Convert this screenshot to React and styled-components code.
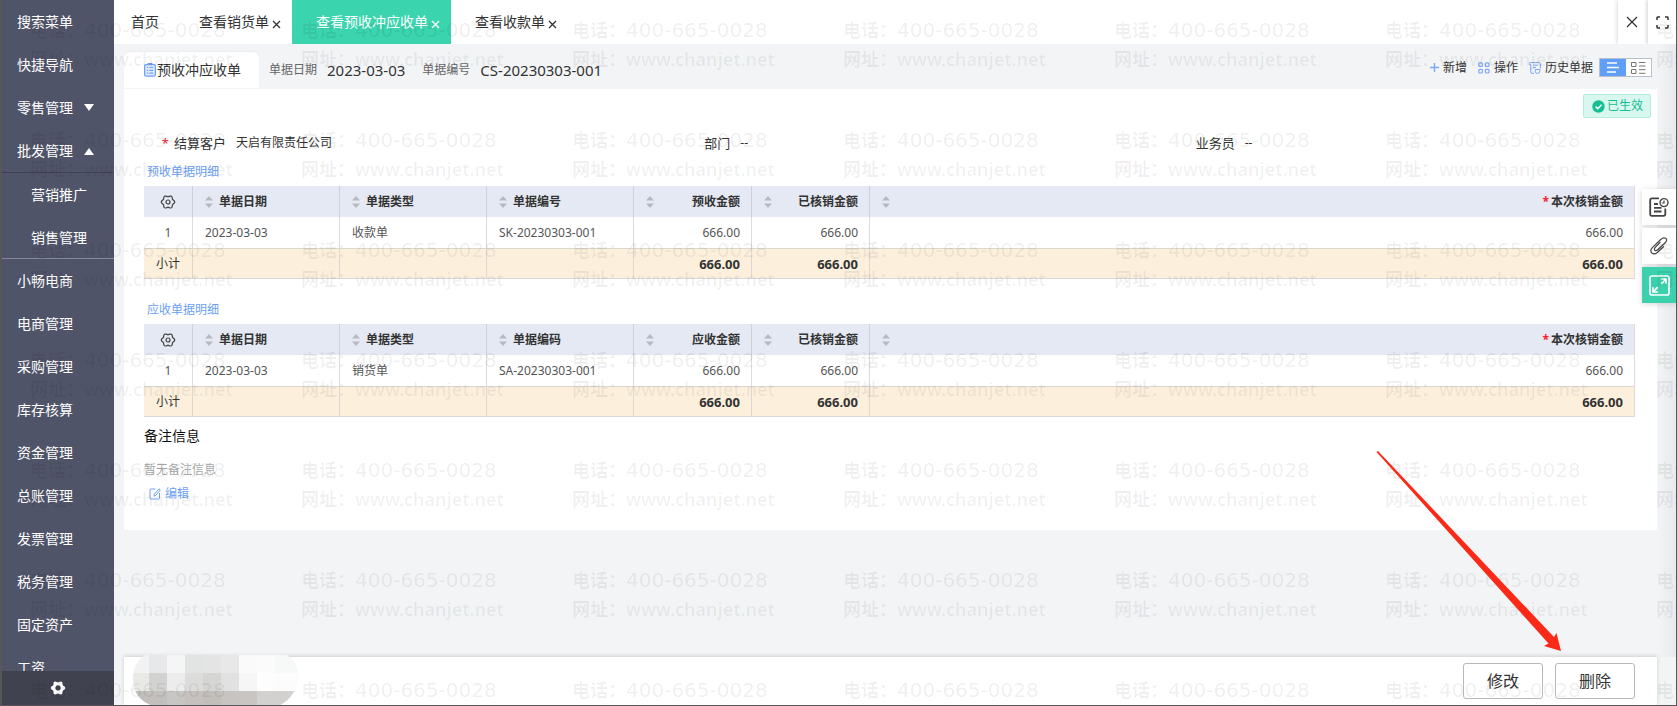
import React from 'react';
import styled, { createGlobalStyle } from 'styled-components';

const GlobalStyle = createGlobalStyle`
	* {
		box-sizing: border-box;
	}
	body {
		margin: 0;
		font-family: 'Noto Sans', 'Noto Sans CJK SC', sans-serif;
		font-size: 12px;
		line-height: 20px;
		color: #333;
	}
	button {
		border: 0;
		padding: 0;
		background: none;
		font: inherit;
		color: inherit;
		cursor: pointer;
	}
	a {
		color: inherit;
		text-decoration: none;
	}
	svg {
		display: block;
		flex: none;
	}
`;

const Shell = styled.div`
	position: relative;
	display: flex;
	height: 100vh;
	overflow: hidden;
	background: #f2f4f6;
	border: solid #57575a;
	border-width: 0 1px 1px 2px;
`;

/* sidebar */

const Sidebar = styled.aside`
	display: flex;
	flex-direction: column;
	width: 112px;
	flex: none;
	background: #505469;
	color: #fff;
`;

const Menu = styled.nav`
	flex: 1;
	min-height: 0;
	overflow: hidden;
	font-size: 14px;
`;

const MenuLink = styled.a`
	display: flex;
	align-items: center;
	gap: 11px;
	height: 43px;
	padding-left: ${({ $sub }) => ($sub ? '29px' : '15px')};
`;

const SubMenu = styled.div`
	border-top: 1px solid #3f4253;
	box-shadow: inset 0 -1px #858899;
`;

const SettingsButton = styled.button`
	display: flex;
	align-items: center;
	justify-content: center;
	height: 34px;
	background: #40434f;
	color: #fff;
`;

/* top tabs */

const Main = styled.div`
	display: flex;
	flex-direction: column;
	flex: 1;
	min-width: 0;
`;

const TopBar = styled.header`
	display: flex;
	height: 44px;
	flex: none;
	background: #fff;
`;

const Tab = styled.button`
	display: flex;
	align-items: center;
	gap: 3px;
	padding: ${({ $home }) => ($home ? '0 16px 0 17px' : '0 11px 0 24px')};
	font-size: 14px;
	white-space: nowrap;
	background: ${({ $active }) => ($active ? '#3ad4af' : 'transparent')};
	color: ${({ $active }) => ($active ? '#fff' : '#333')};
	svg {
		margin-top: 4px;
	}
`;

const WindowButtons = styled.div`
	display: flex;
	gap: 2px;
	margin-left: auto;
`;

const WindowButton = styled.button`
	display: flex;
	align-items: center;
	justify-content: center;
	width: 28px;
	background: #fff;
	box-shadow: -1px 0 4px rgba(0, 0, 0, 0.15);
`;

/* document header */

const Page = styled.main`
	flex: 1;
	min-height: 0;
	padding: 0 19px 0 10px;
	background: linear-gradient(to left, #e7eaee, #f2f4f6 18px);
`;

const DocHeader = styled.div`
	display: flex;
	align-items: center;
	height: 44px;
	padding-top: 8px;
	margin-bottom: 1px;
`;

const DocTab = styled.h1`
	display: flex;
	align-items: center;
	gap: 1px;
	width: 135px;
	height: 36px;
	margin: 0 10px 0 0;
	padding-left: 20px;
	background: #fff;
	border-radius: 6px 6px 0 0;
	box-shadow: 0 -1px 2px rgba(0, 0, 0, 0.04);
	font-size: 14px;
	font-weight: 400;
	white-space: nowrap;
	svg {
		color: #6d9ff5;
	}
`;

const Meta = styled.div`
	display: flex;
	align-items: center;
	gap: 10px;
	margin-right: 17px;
	color: #666;
	white-space: nowrap;
	strong {
		font-size: 15px;
		font-weight: 400;
		color: #333;
	}
`;

const Actions = styled.div`
	display: flex;
	align-items: center;
	gap: 11px;
	height: 20px;
	margin: 0 5px 5px auto;
`;

const Action = styled.button`
	display: flex;
	align-items: center;
	gap: 4px;
	white-space: nowrap;
	svg {
		color: #7aa6f5;
	}
`;

const ViewToggle = styled.div`
	display: flex;
	width: 53px;
	height: 19px;
	margin-left: -5px;
	border: 1px solid #b9c0cb;
	background: #fff;
`;

const ViewButton = styled.button`
	display: flex;
	align-items: center;
	justify-content: center;
	flex: 1;
	background: ${({ $on }) => ($on ? '#609ff8' : '#fff')};
	color: ${({ $on }) => ($on ? '#fff' : '#777')};
`;

/* document card */

const Card = styled.section`
	padding: 5px 0 26px 20px;
	background: #fff;
`;

const Status = styled.div`
	display: flex;
	align-items: center;
	gap: 2px;
	width: 68px;
	height: 24px;
	margin: 0 6px 12px auto;
	padding-left: 8px;
	border: 1px solid #b5eddd;
	border-radius: 2px;
	background: #d8f7ee;
	color: #15bf92;
`;

const Fields = styled.dl`
	display: grid;
	grid-template-columns: repeat(3, 1fr);
	height: 26px;
	margin: 0 0 6px;
	line-height: 26px;
`;

const Field = styled.div`
	display: flex;
	align-items: center;
	gap: 10px;
	dt {
		width: 82px;
		text-align: right;
		font-size: 13px;
	}
	dd {
		margin: 0;
	}
`;

const Required = styled.span`
	color: #f5222d;
	margin-right: ${({ $wide }) => ($wide ? '5px' : '2px')};
`;

const Detail = styled.section`
	margin: 0 22px 21px 0;
	&:last-of-type {
		margin-bottom: 7px;
	}
`;

const DetailTitle = styled.h2`
	margin: 0 0 4px 3px;
	font-size: 12px;
	font-weight: 400;
	color: #6d9ff5;
`;

const Table = styled.table`
	width: 100%;
	table-layout: fixed;
	border-collapse: separate;
	border-spacing: 0;
	border-right: 1px solid #dcdcdc;
	th,
	td {
		height: 31px;
		padding: 0 11px 0 12px;
		border-left: 1px solid #dcdcde;
		text-align: left;
		white-space: nowrap;
	}
	th:first-child,
	td:first-child {
		padding: 0;
		border-left: 0;
		text-align: center;
	}
	thead th {
		background: #e5e9f4;
		border-left-color: #cdd1db;
	}
	td {
		color: #555;
	}
	tfoot td {
		background: #fcf0dc;
		border-top: 1px solid #dcd8d0;
		border-bottom: 1px solid #d8d8d8;
		border-left-color: #dcd8d0;
		color: #333;
	}
`;

const Col = styled.col`
	width: ${({ $width }) => ($width ? `${$width}px` : 'auto')};
`;

const HeadCell = styled.div`
	display: flex;
	align-items: center;
	justify-content: ${({ $number }) => ($number ? 'space-between' : 'flex-start')};
	gap: 6px;
`;

const IconButton = styled.button`
	display: block;
	margin: 0 auto;
	color: #444;
`;

const NumberCell = styled.td`
	&& {
		text-align: right;
	}
	font-size: ${({ $total }) => ($total ? '13px' : '12px')};
	font-weight: ${({ $total }) => ($total ? 700 : 400)};
`;

const NotesTitle = styled.h2`
	margin: 0 0 12px;
	font-size: 14px;
	font-weight: 400;
	line-height: 24px;
	color: #111;
`;

const NotesEmpty = styled.p`
	margin: 0 0 4px;
	color: #aaa;
`;

const EditButton = styled.button`
	display: flex;
	align-items: center;
	gap: 4px;
	margin-left: 5px;
	color: #6d9ff5;
`;

/* footer */

const FootWrap = styled.div`
	padding: 0 19px 0 10px;
	flex: none;
`;

const Footer = styled.footer`
	position: relative;
	display: flex;
	align-items: center;
	justify-content: flex-end;
	gap: 12px;
	height: 48px;
	padding-right: 22px;
	background: #fff;
	box-shadow: 0 -1px 4px rgba(0, 0, 0, 0.16);
`;

const FootButton = styled.button`
	width: 80px;
	height: 36px;
	border: 1px solid #b8b8b8;
	border-radius: 3px;
	background: #fff;
	font-size: 16px;
`;

const Mosaic = styled.svg`
	position: absolute;
	left: 9px;
	bottom: -1px;
`;

/* floating layers */

const Rail = styled.div`
	position: absolute;
	top: 189px;
	right: 0;
	display: flex;
	flex-direction: column;
	gap: 3px;
`;

const RailButton = styled.button`
	display: flex;
	align-items: center;
	justify-content: center;
	width: 34px;
	height: 36px;
	background: ${({ $on }) => ($on ? '#3ad1ac' : '#fff')};
	color: ${({ $on }) => ($on ? '#fff' : '#444')};
	box-shadow: 0 1px 6px rgba(0, 0, 0, 0.16);
`;

const Watermark = styled.div`
	position: absolute;
	inset: 0;
	display: grid;
	grid-template-columns: repeat(7, 271px);
	grid-auto-rows: 110px;
	padding: 16px 0 0 28px;
	overflow: hidden;
	pointer-events: none;
	font-size: 18px;
	line-height: 29px;
	font-weight: 600;
	white-space: nowrap;
	color: rgba(0, 0, 0, 0.06);
`;

const Phone = styled.span`
	font-family: 'DejaVu Sans', sans-serif;
	font-size: 20px;
	font-weight: 400;
	color: rgba(0, 0, 0, 0.07);
`;

const Arrow = styled.svg`
	position: absolute;
	right: 113px;
	bottom: 52px;
	pointer-events: none;
`;

const lobes = (size, base, wave) => {
	const points = [];
	for (let a = 0; a < 360; a += 6) {
		const t = (a * Math.PI) / 180;
		const r = base + wave * Math.cos(6 * t);
		points.push(`${(size / 2 + r * Math.cos(t)).toFixed(2)} ${(size / 2 + r * Math.sin(t)).toFixed(2)}`);
	}
	return `M${points.join('L')}Z`;
};

const Svg = ({ w, h = w, children }) => (
	<svg width={w} height={h} viewBox={`0 0 ${w} ${h}`} fill="none" stroke="currentColor" aria-hidden="true">
		{children}
	</svg>
);

const CrossIcon = ({ size = 9 }) => (
	<Svg w={size}>
		<path d={`M1 1L${size - 1} ${size - 1}M${size - 1} 1L1 ${size - 1}`} strokeWidth="1.3" />
	</Svg>
);

const CaretIcon = ({ up }) => (
	<Svg w={10} h={8}>
		<path d={up ? 'M0 8L5 1L10 8Z' : 'M0 0H10L5 7Z'} fill="currentColor" stroke="none" />
	</Svg>
);

const SortIcon = () => (
	<svg width="8" height="12" viewBox="0 0 8 12" fill="#b6b9c0" aria-hidden="true">
		<path d="M0 4.5L4 0L8 4.5ZM0 7.5H8L4 12Z" />
	</svg>
);

const GearIcon = () => (
	<Svg w={16}>
		<path d={lobes(16, 6, 0.7)} strokeWidth="1.2" />
		<circle cx="8" cy="8" r="2" strokeWidth="1.2" />
	</Svg>
);

const ListIcon = () => (
	<Svg w={12} h={14}>
		<rect x="0.6" y="1.6" width="10.8" height="11.6" rx="1.5" strokeWidth="1.2" fill="#dfe9fd" />
		<path d="M3.5 0.7H8.5M2.8 4.5H4.2M5.4 4.5H9.2M2.8 7.3H4.2M5.4 7.3H9.2M2.8 10.2H4.2M5.4 10.2H9.2" strokeWidth="1.2" />
	</Svg>
);

const menuTop = [['搜索菜单'], ['快捷导航'], ['零售管理', 'down'], ['批发管理', 'up']];
const menuSub = ['营销推广', '销售管理'];
const menuRest = ['小畅电商', '电商管理', '采购管理', '库存核算', '资金管理', '总账管理', '发票管理', '税务管理', '固定资产', '工资'];

const tabs = [{ name: '查看销货单' }, { name: '查看预收冲应收单', active: true }, { name: '查看收款单' }];

const fields = [
	{ label: '结算客户', value: '天启有限责任公司', required: true },
	{ label: '部门', value: '--' },
	{ label: '业务员', value: '--' }
];

const details = [
	{
		title: '预收单据明细',
		heads: ['单据日期', '单据类型', '单据编号', '预收金额', '已核销金额', '本次核销金额'],
		row: ['2023-03-03', '收款单', 'SK-20230303-001', '666.00', '666.00', '666.00']
	},
	{
		title: '应收单据明细',
		heads: ['单据日期', '单据类型', '单据编码', '应收金额', '已核销金额', '本次核销金额'],
		row: ['2023-03-03', '销货单', 'SA-20230303-001', '666.00', '666.00', '666.00']
	}
];

const widths = [48, 147, 147, 147, 118, 118, 0];

const mosaic = [
	['#f1f2f1', '#e6e8e9', '#f5f5f5', '#e2e4e4', '#e3e4e3', '#e8e8e9', '#fafafa', '#fafbfa', '#f7f8f8'],
	['#e9eae6', '#d2d2d1', '#ececec', '#dcdcdb', '#d5d5d3', '#e1e1e1', '#f6f6f6', '#fdfdfd', '#fcfcfc'],
	['#c0bfbd', '#c2bfbd', '#c8c6c4', '#c6c1be', '#c2beba', '#c7c4c1', '#c8c5c3', '#d3d1d0', '#d3d1cf']
];

const DetailTable = ({ title, heads, row }) => (
	<Detail>
		<DetailTitle>{title}</DetailTitle>
		<Table aria-label={title}>
			<colgroup>{widths.map((width, i) => <Col key={i} $width={width} />)}</colgroup>
			<thead>
				<tr>
					<th>
						<IconButton type="button" aria-label="列设置">
							<GearIcon />
						</IconButton>
					</th>
					{heads.map((head, i) => (
						<th key={head}>
							<HeadCell $number={i > 2}>
								<SortIcon />
								<span>
									{i === 5 && <Required>*</Required>}
									{head}
								</span>
							</HeadCell>
						</th>
					))}
				</tr>
			</thead>
			<tbody>
				<tr>
					<td>1</td>
					{row.map((value, i) => (i > 2 ? <NumberCell key={i}>{value}</NumberCell> : <td key={i}>{value}</td>))}
				</tr>
			</tbody>
			<tfoot>
				<tr>
					<td>小计</td>
					{row.map((value, i) => (i > 2 ? <NumberCell key={i} $total>{value}</NumberCell> : <td key={i} />))}
				</tr>
			</tfoot>
		</Table>
	</Detail>
);

const App = () => (
	<>
		<GlobalStyle />
		<Shell>
			<Sidebar>
				<Menu>
					{menuTop.map(([name, caret]) => (
						<MenuLink key={name} href="#">
							{name}
							{caret && <CaretIcon up={caret === 'up'} />}
						</MenuLink>
					))}
					<SubMenu>
						{menuSub.map((name) => (
							<MenuLink key={name} href="#" $sub>
								{name}
							</MenuLink>
						))}
					</SubMenu>
					{menuRest.map((name) => (
						<MenuLink key={name} href="#">
							{name}
						</MenuLink>
					))}
				</Menu>
				<SettingsButton type="button" aria-label="设置">
					<Svg w={16}>
						<path d={`${lobes(16, 6.4, 0.9)}M8 5.3a2.7 2.7 0 1 0 0.01 0Z`} fill="currentColor" fillRule="evenodd" stroke="none" />
					</Svg>
				</SettingsButton>
			</Sidebar>

			<Main>
				<TopBar>
					<Tab type="button" $home>
						首页
					</Tab>
					{tabs.map(({ name, active }) => (
						<Tab key={name} type="button" $active={active}>
							{name}
							<CrossIcon />
						</Tab>
					))}
					<WindowButtons>
						<WindowButton type="button" aria-label="关闭">
							<CrossIcon size={12} />
						</WindowButton>
						<WindowButton type="button" aria-label="全屏">
							<Svg w={13}>
								<path d="M1 4V1.7Q1 1 1.7 1H4M9 1h2.3Q12 1 12 1.7V4M12 9v2.3q0 .7-.7.7H9M4 12H1.7Q1 12 1 11.3V9" strokeWidth="1.5" />
							</Svg>
						</WindowButton>
					</WindowButtons>
				</TopBar>

				<Page>
					<DocHeader>
						<DocTab>
							<ListIcon />
							预收冲应收单
						</DocTab>
						<Meta>
							单据日期<strong>2023-03-03</strong>
						</Meta>
						<Meta>
							单据编号<strong>CS-20230303-001</strong>
						</Meta>
						<Actions>
							<Action type="button">
								<Svg w={9}>
									<path d="M4.5 0V9M0 4.5H9" strokeWidth="1.3" />
								</Svg>
								新增
							</Action>
							<Action type="button">
								<Svg w={12}>
									<rect x="0.8" y="0.8" width="3.6" height="3.6" rx="1" strokeWidth="1.2" />
									<rect x="7.4" y="0.8" width="3.6" height="3.6" rx="1" strokeWidth="1.2" />
									<rect x="0.8" y="7.4" width="3.6" height="3.6" rx="1" strokeWidth="1.2" />
									<rect x="7.4" y="7.4" width="3.6" height="3.6" rx="1" strokeWidth="1.2" />
								</Svg>
								操作
							</Action>
							<Action type="button">
								<Svg w={12}>
									<path d="M5 11.4H3Q1.8 11.4 1.8 10V2.6M.4 2.6V1.4Q.4.6 1.2.6H10.6Q11.4.6 11.4 1.4V6.5M.4 2.6H1.8M4 3.2H9.2M4 5.6H7M6.2 7.5H10.8V9.2Q10.8 11.4 8.5 11.4Q6.2 11.4 6.2 9.2Z" />
								</Svg>
								历史单据
							</Action>
							<ViewToggle>
								<ViewButton type="button" aria-label="列表视图" $on>
									<Svg w={13} h={11}>
										<path d="M1 1H11M1 5.5H13M1 10H10" strokeWidth="1.3" />
									</Svg>
								</ViewButton>
								<ViewButton type="button" aria-label="卡片视图">
									<Svg w={15} h={13}>
										<path d="M0.5 1.5H5V5.5H0.5ZM0.5 8.5H5V12.5H0.5ZM8 1.5H14.5M8 5H14.5M8 8.7H14.5M8 12.3H14.5" />
									</Svg>
								</ViewButton>
							</ViewToggle>
						</Actions>
					</DocHeader>

					<Card>
						<Status>
							<Svg w={13}>
								<circle cx="6.5" cy="6.5" r="6.2" fill="currentColor" stroke="none" />
								<path d="M3.6 6.6L5.8 8.7L9.5 4.8" stroke="#fff" strokeWidth="1.6" />
							</Svg>
							已生效
						</Status>
						<Fields>
							{fields.map(({ label, value, required }) => (
								<Field key={label}>
									<dt>
										{required && <Required $wide>*</Required>}
										{label}
									</dt>
									<dd>{value}</dd>
								</Field>
							))}
						</Fields>
						{details.map((detail) => <DetailTable key={detail.title} {...detail} />)}
						<NotesTitle>备注信息</NotesTitle>
						<NotesEmpty>暂无备注信息</NotesEmpty>
						<EditButton type="button">
							<Svg w={12}>
								<path d="M6.5 1H2Q1 1 1 2V10Q1 11 2 11H9.5Q10.5 11 10.5 10V5M5 8.2L5.3 6.2L10 .8L11.3 2L6.8 7.4Z" />
							</Svg>
							编辑
						</EditButton>
					</Card>
				</Page>

				<FootWrap>
					<Footer>
						<Mosaic width="166" height="51" viewBox="0 0 166 51" aria-hidden="true">
							<clipPath id="pill">
								<path d="M12 0H154Q166 8 166 22Q162 44 145 51H20Q0 44 0 24Q0 8 12 0Z" />
							</clipPath>
							<g clipPath="url(#pill)">
								{mosaic.map((line, y) =>
									line.map((fill, x) => (
										<rect key={`${x}-${y}`} x={x * 18 - 2} y={y * 18} width={x === 8 ? 26 : 18} height="18" fill={fill} />
									))
								)}
							</g>
						</Mosaic>
						<FootButton type="button">修改</FootButton>
						<FootButton type="button">删除</FootButton>
					</Footer>
				</FootWrap>
			</Main>

			<Rail>
				<RailButton type="button" aria-label="单据记录">
					<Svg w={20}>
						<path d="M10 1.3H3Q1.2 1.3 1.2 3V17Q1.2 18.8 3 18.8H14.5Q16.3 18.8 16.3 17V11.5M5 7H9M5 10.8H12.5M5 14.5H12.5" strokeWidth="1.8" />
						<circle cx="15" cy="5.6" r="4" strokeWidth="1.4" />
						<path d="M15 3.6V6H12.8" strokeWidth="1.2" />
					</Svg>
				</RailButton>
				<RailButton type="button" aria-label="附件">
					<Svg w={20}>
						<path d="M11 6.5L6 11.7Q4.600 13.800 6.300 14.600Q7.500 15 8.700 13.700L16.500 6.500Q18.800 3.800 16.600 2.300Q14.300 1 12 3.300L3.300 11.600Q.600 14.700 2.800 17Q5.300 19 8.300 16.500L14.500 10.700" strokeWidth="1.2" strokeLinecap="round" />
					</Svg>
				</RailButton>
				<RailButton type="button" aria-label="展开" $on>
					<Svg w={21}>
						<rect x="1" y="1" width="19" height="19" rx="2" strokeWidth="1.7" />
						<path d="M12.2 8.8L17 4M12.2 4H17V8.8M8.8 12.2L4 17M4 12.2V17H8.8" strokeWidth="1.7" />
					</Svg>
				</RailButton>
			</Rail>

			<Watermark aria-hidden="true">
				{Array.from({ length: 49 }, (_, i) => (
					<div key={i}>
						<div>
							电话：<Phone>400-665-0028</Phone>
						</div>
						<div>网址：www.chanjet.net</div>
					</div>
				))}
			</Watermark>

			<Arrow width="188" height="204" viewBox="0 0 188 204" aria-hidden="true">
				<path d="M1.5 3L3 2L179 188L181.5 184L186 202L169 197L173.5 194.5Z" fill="#fb2a18" />
			</Arrow>
		</Shell>
	</>
);

export default App;
